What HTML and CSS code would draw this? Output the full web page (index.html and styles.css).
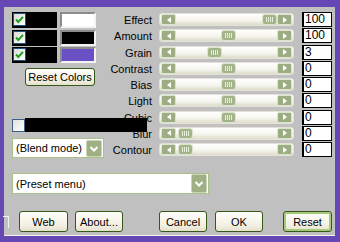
FILE: index.html
```html
<!DOCTYPE html>
<html>

<head>
    <meta charset="utf-8">
    <title>Grain</title>
    <link rel="stylesheet" href="styles.css">
</head>

<body>
    <div class="dialog">
        <div class="top">
            <div class="colors">
                <div class="colorRow">
                    <div class="pick">
                        <span class="check">
                            <svg width="11" height="11" viewBox="0 0 11 11"><path d="M2 5.5 L4.3 8 L9 2.8" fill="none" stroke="#21a121" stroke-width="2"/></svg>
                        </span>
                    </div>
                    <div class="swatch white"></div>
                </div>
                <div class="colorRow">
                    <div class="pick">
                        <span class="check">
                            <svg width="11" height="11" viewBox="0 0 11 11"><path d="M2 5.5 L4.3 8 L9 2.8" fill="none" stroke="#21a121" stroke-width="2"/></svg>
                        </span>
                    </div>
                    <div class="swatch black"></div>
                </div>
                <div class="colorRow">
                    <div class="pick">
                        <span class="check">
                            <svg width="11" height="11" viewBox="0 0 11 11"><path d="M2 5.5 L4.3 8 L9 2.8" fill="none" stroke="#21a121" stroke-width="2"/></svg>
                        </span>
                    </div>
                    <div class="swatch purple"></div>
                </div>

                <button class="btn resetColors">Reset Colors</button>

                <div class="combo blend">
                    <span class="comboText">(Blend mode)</span>
                    <span class="drop">
                        <svg width="14" height="15" viewBox="0 0 14 15"><polyline points="3.5,6 7,9.5 10.5,6" fill="none" stroke="#fff" stroke-width="2"/></svg>
                    </span>
                </div>
            </div>

            <div class="sliders">
                <div class="label">Effect</div>
                <div class="slider"><span class="arrow left"></span><span class="trough"><span class="thumb" style="margin-left: 86px;"></span></span><span class="arrow right"></span></div>
                <div class="value">100</div>

                <div class="label">Amount</div>
                <div class="slider"><span class="arrow left"></span><span class="trough"><span class="thumb" style="margin-left: 45px;"></span></span><span class="arrow right"></span></div>
                <div class="value">100</div>

                <div class="label">Grain</div>
                <div class="slider"><span class="arrow left"></span><span class="trough"><span class="thumb" style="margin-left: 31px;"></span></span><span class="arrow right"></span></div>
                <div class="value">3</div>

                <div class="label">Contrast</div>
                <div class="slider"><span class="arrow left"></span><span class="trough"><span class="thumb" style="margin-left: 45px;"></span></span><span class="arrow right"></span></div>
                <div class="value">0</div>

                <div class="label">Bias</div>
                <div class="slider"><span class="arrow left"></span><span class="trough"><span class="thumb" style="margin-left: 45px;"></span></span><span class="arrow right"></span></div>
                <div class="value">0</div>

                <div class="label">Light</div>
                <div class="slider"><span class="arrow left"></span><span class="trough"><span class="thumb" style="margin-left: 45px;"></span></span><span class="arrow right"></span></div>
                <div class="value">0</div>

                <div class="label">Cubic</div>
                <div class="slider"><span class="arrow left"></span><span class="trough"><span class="thumb" style="margin-left: 45px;"></span></span><span class="arrow right"></span></div>
                <div class="value">0</div>

                <div class="label">Blur</div>
                <div class="slider"><span class="arrow left"></span><span class="trough"><span class="thumb" style="margin-left: 2px;"></span></span><span class="arrow right"></span></div>
                <div class="value">0</div>

                <div class="label">Contour</div>
                <div class="slider"><span class="arrow left"></span><span class="trough"><span class="thumb" style="margin-left: 2px;"></span></span><span class="arrow right"></span></div>
                <div class="value">0</div>
            </div>

            <!-- black strip that sits over the Cubic / Blur labels -->
            <div class="blackout"><span class="box"></span></div>
        </div>

        <div class="combo preset">
            <span class="comboText">(Preset menu)</span>
            <span class="drop">
                <svg width="14" height="17" viewBox="0 0 14 17"><polyline points="3.5,7 7,10.5 10.5,7" fill="none" stroke="#fff" stroke-width="2"/></svg>
            </span>
        </div>

        <div class="buttons">
            <button class="btn web">Web</button>
            <button class="btn about">About...</button>
            <button class="btn cancel">Cancel</button>
            <button class="btn ok">OK</button>
            <button class="btn reset">Reset</button>
        </div>

        <div class="edge"></div>
    </div>
</body>

</html>
```

FILE: styles.css
```css
body {
    margin: 0;
    width: 340px;
    height: 242px;
    overflow: hidden;
    background-color: #6548b3;
    font-family: "Liberation Sans", Arial, sans-serif;
    font-size: 11px;
    color: black;
}

.dialog {
    position: relative;
    margin: 7px 5px 0 4px;
    height: 229px;
    padding: 5px 3px 0 8px;
    box-sizing: border-box;
    background-color: #c0c0c0;
    border-bottom: 1px solid #f2f2f2;
    display: flex;
    flex-direction: column;
}

.top {
    position: relative;
    display: flex;
    height: 146px;
}

/* left column */

.colors {
    width: 98px;
    display: flex;
    flex-direction: column;
}

.colorRow {
    display: flex;
    height: 16px;
    margin-bottom: 1.5px;
}

.pick {
    width: 45px;
    height: 16px;
    background-color: black;
    padding: 1px;
    box-sizing: border-box;
}

.check {
    display: flex;
    align-items: center;
    justify-content: center;
    width: 13px;
    height: 13px;
    box-sizing: border-box;
    border: 1px solid #1c5180;
    background: linear-gradient(135deg, #dcdcd6, #ffffff);
}

.swatch {
    width: 36px;
    height: 16px;
    margin-left: 3px;
    box-sizing: border-box;
    border: 2px solid;
    border-color: #8c8c8c #f4f4f4 #f4f4f4 #8c8c8c;
}

.white {
    background-color: #ffffff;
}

.black {
    background-color: #000000;
}

.purple {
    background-color: #6b4fc5;
}

.btn {
    height: 21px;
    padding: 0;
    border: 1px solid #37581a;
    border-radius: 3px;
    background: linear-gradient(#fffffb, #f3f0e2 70%, #e4e0cc);
    font-family: "Liberation Sans", Arial, sans-serif;
    font-size: 11px;
    color: black;
}

.resetColors {
    width: 70px;
    height: 18px;
    margin-top: 3.5px;
    margin-left: 13px;
}

.combo {
    display: flex;
    align-items: center;
    box-sizing: border-box;
    border: 1px solid #a9c08a;
    background-color: white;
}

.comboText {
    flex: 1;
    padding-left: 3px;
}

.drop {
    display: flex;
    margin-right: 1px;
    background-color: #9fb085;
    border: 1px solid #c9d5b7;
    border-radius: 2px;
}

.blend {
    width: 92px;
    height: 20px;
    margin-top: auto;
}

/* sliders */

.sliders {
    display: grid;
    grid-template-columns: 42px 135px 30px;
    grid-auto-rows: 16.25px;
    column-gap: 7px;
}

.label {
    text-align: right;
    line-height: 16px;
}

.slider {
    display: flex;
    align-items: center;
    height: 13px;
    margin-top: 1px;
    padding: 0 1px;
    box-sizing: border-box;
    border: 1px solid #e2e2da;
    border-radius: 3px;
    background: linear-gradient(#ffffff, #f6f5ef 55%, #dedcca);
}

.arrow {
    display: flex;
    align-items: center;
    justify-content: center;
    width: 15px;
    height: 11px;
    box-sizing: border-box;
    background-color: #9cad82;
    border: 1px solid #dbe4cc;
    border-radius: 2px;
}

.arrow::after {
    content: "";
    border-top: 3px solid transparent;
    border-bottom: 3px solid transparent;
}

.left::after {
    border-right: 4px solid white;
}

.right::after {
    border-left: 4px solid white;
}

.trough {
    flex: 1;
    display: flex;
}

.thumb {
    width: 15px;
    height: 11px;
    box-sizing: border-box;
    border: 1px solid #dbe4cc;
    border-radius: 3px;
    background-color: #a3b48a;
    background-image: repeating-linear-gradient(90deg, #e6eed8 0 1px, transparent 1px 2px);
    background-size: 8px 5px;
    background-position: center;
    background-repeat: no-repeat;
}

.value {
    margin-left: 1px;
    width: 30px;
    height: 15px;
    box-sizing: border-box;
    border: 1px solid black;
    border-left-width: 2px;
    background-color: white;
    padding-left: 1px;
    line-height: 13px;
    font-size: 12px;
}

.blackout {
    position: absolute;
    left: 13px;
    top: 106px;
    width: 122px;
    height: 14px;
    background-color: black;
}

.box {
    position: absolute;
    left: -13px;
    top: 1px;
    width: 13px;
    height: 13px;
    box-sizing: border-box;
    border: 1px solid #3f5f86;
    background: linear-gradient(135deg, #e0e0da, #ffffff);
}

/* bottom */

.preset {
    width: 197px;
    height: 21px;
    margin-top: 15px;
}

.buttons {
    display: flex;
    margin-top: 17px;
    padding-left: 7px;
}

.web,
.reset {
    width: 49px;
}

.about,
.cancel,
.ok {
    width: 48px;
}

.about {
    margin-left: 7px;
}

.cancel {
    margin-left: 36px;
}

.ok {
    margin-left: 8px;
}

.reset {
    margin-left: 20px;
    box-shadow: inset 0 0 0 2px #a6c97c;
}

.edge {
    position: absolute;
    left: -1px;
    top: 209px;
    width: 5px;
    height: 11px;
    border-top: 1px solid #f2f2f2;
    border-right: 1px solid #f2f2f2;
}
```
